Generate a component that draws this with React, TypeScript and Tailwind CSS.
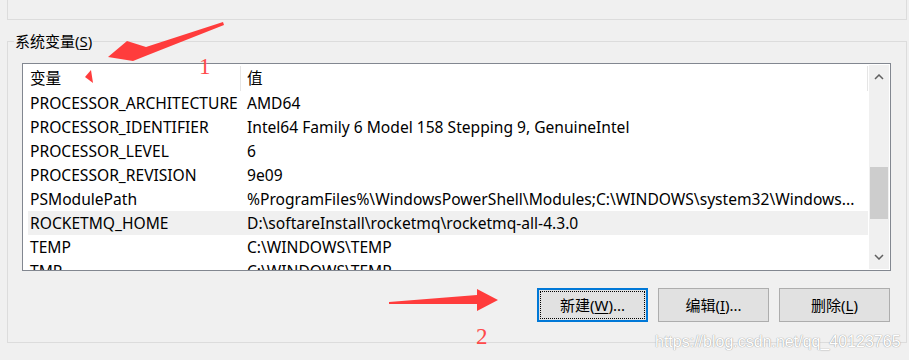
import React from "react";

const rows: [string, string][] = [
  ["PROCESSOR_ARCHITECTURE", "AMD64"],
  ["PROCESSOR_IDENTIFIER", "Intel64 Family 6 Model 158 Stepping 9, GenuineIntel"],
  ["PROCESSOR_LEVEL", "6"],
  ["PROCESSOR_REVISION", "9e09"],
  ["PSModulePath", "%ProgramFiles%\\WindowsPowerShell\\Modules;C:\\WINDOWS\\system32\\Windows..."],
  ["ROCKETMQ_HOME", "D:\\softareInstall\\rocketmq\\rocketmq-all-4.3.0"],
  ["TEMP", "C:\\WINDOWS\\TEMP"],
  ["TMP", "C:\\WINDOWS\\TEMP"],
];

const font = { fontFamily: '"Noto Sans", "Noto Sans CJK SC", sans-serif' };

function Btn({ label, k, tail, focused }: { label: string; k: string; tail: string; focused?: boolean }) {
  return (
    <div
      className={
        "w-[111px] h-[34px] bg-[#e1e1e1] flex items-center justify-center text-[15px] text-black " +
        (focused ? "border-2 border-[#0078d7] p-[1px]" : "border border-[#adadad]")
      }
    >
      {focused ? (
        <div className="w-full h-full border border-dotted border-black flex items-center justify-center">
          {label}(<span className="underline underline-offset-2">{k}</span>){tail}
        </div>
      ) : (
        <span>
          {label}(<span className="underline underline-offset-2">{k}</span>){tail}
        </span>
      )}
    </div>
  );
}

export default function App() {
  return (
    <div className="relative w-[909px] h-[360px] overflow-hidden bg-[#f0f0f0] text-black" style={font}>
      {/* previous group box (bottom part) */}
      <div className="ml-[7px] w-[900px] h-[20px] border-x border-b border-[#dcdcdc]" />

      {/* system variables group box */}
      <div className="relative ml-[7px] mt-[21px] w-[900px] h-[302px] border border-[#dcdcdc]">
        <div className="absolute left-[6px] top-[-11px] bg-[#f0f0f0] px-[1px] text-[15px] leading-[20px]">
          系统变量(<span className="underline underline-offset-2">S</span>)
        </div>

        <div className="ml-[14px] mt-[21px] w-[869px] h-[208px] border border-[#828790] bg-white flex">
          <div className="flex-1 overflow-hidden pl-[5px] pr-[1px] text-[15.6px]">
            {/* header */}
            <div className="flex h-[27px] items-center">
              <div className="w-[212px] pl-[2px] pt-[2px]">变量</div>
              <div className="w-px h-[25px] mt-[2px] bg-[#e5e5e5]" />
              <div className="flex-1 pl-[6px] pt-[2px]">值</div>
              <div className="w-px h-[25px] mt-[2px] bg-[#e5e5e5]" />
            </div>
            {rows.map(([n, v], i) => (
              <div
                key={n}
                className={
                  "flex h-[24px] items-center pt-[2px] whitespace-nowrap " + (i === 5 ? "bg-[#f0f0f0]" : "")
                }
              >
                <div className="w-[213px] pl-[2px]">{n}</div>
                <div className="flex-1 pl-[6px]">{v}</div>
              </div>
            ))}
          </div>
          {/* scrollbar */}
          <div className="w-[20px] my-[1px] mr-[1px] bg-[#f0f0f0] flex flex-col">
            <div className="h-[24px] flex items-center justify-center">
              <svg width="10" height="6" viewBox="0 0 10 6">
                <path d="M1 5 L5 1 L9 5" fill="none" stroke="#606060" strokeWidth="1.5" />
              </svg>
            </div>
            <div className="h-[78px]" />
            <div className="h-[52px] mx-[1px] bg-[#cdcdcd]" />
            <div className="flex-1" />
            <div className="h-[24px] flex items-center justify-center">
              <svg width="10" height="6" viewBox="0 0 10 6">
                <path d="M1 1 L5 5 L9 1" fill="none" stroke="#606060" strokeWidth="1.5" />
              </svg>
            </div>
          </div>
        </div>

        <div className="mt-[17px] mr-[16px] flex justify-end gap-[10px]">
          <Btn label="新建" k="W" tail="..." focused />
          <Btn label="编辑" k="I" tail="..." />
          <Btn label="删除" k="L" tail="" />
        </div>
      </div>

      {/* annotations */}
      <svg className="absolute inset-0 pointer-events-none" width="909" height="360" viewBox="0 0 909 360">
        <polygon
          points="223,22 146,47 127,41 108,57 133,61 148,55 224,25"
          fill="#ff3c3c"
        />
        <polygon points="91,70 85,77 93,83" fill="#ff3c3c" />
        <polygon points="389,302 477,295 477,289 498,300 477,311 477,304 389,304" fill="#ff3c3c" />
      </svg>
      <div
        className="absolute left-[199px] top-[55px] text-[23px] leading-none text-[#ff4a4a]"
        style={{ fontFamily: '"Liberation Serif", serif' }}
      >
        1
      </div>
      <div
        className="absolute left-[476px] top-[325px] text-[23px] leading-none text-[#ff4a4a]"
        style={{ fontFamily: '"Liberation Serif", serif' }}
      >
        2
      </div>
      <div
        className="absolute left-[655px] top-[334px] text-[16px] leading-none text-white"
        style={{ fontFamily: '"Liberation Sans", sans-serif', textShadow: "0 0 1px #a0a0a0, 0 0 1px #a0a0a0" }}
      >
        https://blog.csdn.net/qq_40123765
      </div>
    </div>
  );
}
